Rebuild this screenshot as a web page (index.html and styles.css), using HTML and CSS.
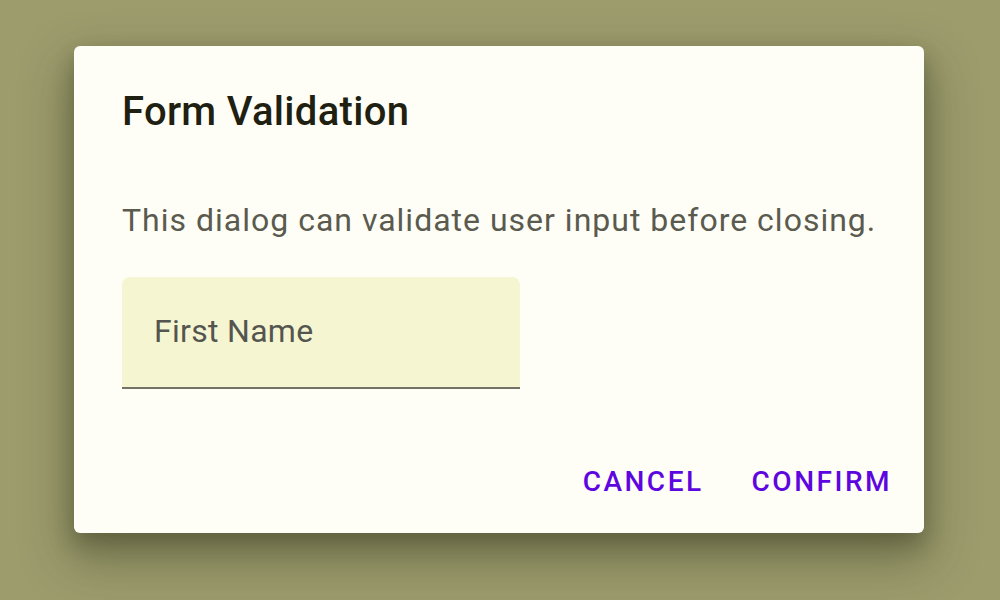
FILE: index.html
```html
<!DOCTYPE html>
<html lang="en">
<head>
<meta charset="utf-8">
<title>Form Validation</title>
<link rel="stylesheet" href="styles.css">
</head>
<body>
<div class="page">
  <div class="dialog" role="dialog">
    <h2 class="dialog-title">Form Validation</h2>
    <p class="dialog-content">This dialog can validate user input before closing.</p>
    <div class="text-field">
      <span class="text-field-label">First Name</span>
    </div>
    <div class="dialog-actions">
      <button class="dialog-button">Cancel</button>
      <button class="dialog-button">Confirm</button>
    </div>
  </div>
</div>
</body>
</html>
```

FILE: styles.css
```css
html, body {
  margin: 0;
  padding: 0;
  height: 100%;
}

body {
  background: #9c9c6d;
  font-family: Roboto, "Noto Sans", "Liberation Sans", sans-serif;
  overflow: hidden;
}

.page {
  padding: 46px 0 0 74px;
}

.dialog {
  width: 850px;
  height: 487px;
  box-sizing: border-box;
  background: #fefef6;
  border-radius: 6px;
  box-shadow: 0 22px 48px 6px rgba(40, 40, 20, 0.35), 0 10px 20px rgba(40, 40, 20, 0.28);
  display: flex;
  flex-direction: column;
  padding: 34px 0 0 0;
}

.dialog-title {
  margin: 0;
  padding: 0 48px;
  font-size: 40px;
  line-height: 64px;
  font-weight: 500;
  color: #1f1f12;
  letter-spacing: 0.3px;
}

.dialog-content {
  margin: 52px 0 0 0;
  padding: 0 0 0 48px;
  font-size: 32px;
  line-height: 48px;
  letter-spacing: 1px;
  white-space: nowrap;
  color: #5a5a4e;
}

.text-field {
  margin: 33px 0 0 48px;
  width: 398px;
  height: 112px;
  box-sizing: border-box;
  background: #f5f5d2;
  border-radius: 8px 8px 0 0;
  border-bottom: 2px solid #727266;
  display: flex;
  align-items: center;
  padding: 0 0 2px 32px;
}

.text-field-label {
  font-size: 32px;
  line-height: 40px;
  letter-spacing: 0.3px;
  color: #555550;
}

.dialog-actions {
  margin-top: auto;
  display: flex;
  justify-content: flex-end;
  align-items: center;
  gap: 16px;
  padding: 16px;
  min-height: 104px;
  box-sizing: border-box;
}

.dialog-button {
  background: none;
  border: none;
  font-family: inherit;
  height: 72px;
  padding: 0 16px;
  font-size: 28px;
  font-weight: 500;
  letter-spacing: 2.5px;
  text-transform: uppercase;
  color: #5e06df;
  cursor: pointer;
}
```
